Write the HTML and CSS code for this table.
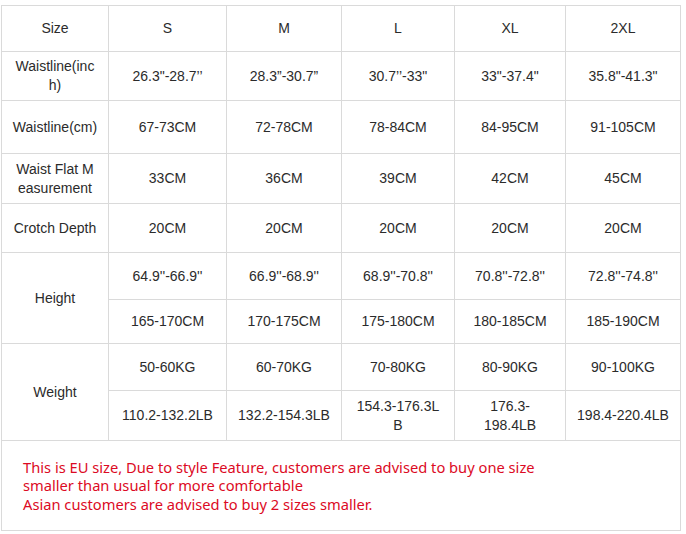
FILE: index.html
```html
<!DOCTYPE html>
<html lang="en">
<head>
<meta charset="utf-8">
<title>Size Chart</title>
<link rel="stylesheet" href="styles.css">
</head>
<body>
<div class="page">
<table class="chart">
  <colgroup>
    <col class="c-label">
    <col class="c-s">
    <col class="c-m">
    <col class="c-l">
    <col class="c-xl">
    <col class="c-2xl">
  </colgroup>
  <tbody>
    <tr class="r-head">
      <td>Size</td><td>S</td><td>M</td><td>L</td><td>XL</td><td>2XL</td>
    </tr>
    <tr class="r-waist-in">
      <td>Waistline(inc<br>h)</td><td>26.3"-28.7’’</td><td>28.3”-30.7”</td><td>30.7’’-33"</td><td>33"-37.4"</td><td>35.8"-41.3"</td>
    </tr>
    <tr class="r-waist-cm">
      <td>Waistline(cm)</td><td>67-73CM</td><td>72-78CM</td><td>78-84CM</td><td>84-95CM</td><td>91-105CM</td>
    </tr>
    <tr class="r-flat">
      <td>Waist Flat M<br>easurement</td><td>33CM</td><td>36CM</td><td>39CM</td><td>42CM</td><td>45CM</td>
    </tr>
    <tr class="r-crotch">
      <td>Crotch Depth</td><td>20CM</td><td>20CM</td><td>20CM</td><td>20CM</td><td>20CM</td>
    </tr>
    <tr class="r-height-in">
      <td rowspan="2">Height</td><td>64.9''-66.9''</td><td>66.9''-68.9''</td><td>68.9''-70.8''</td><td>70.8''-72.8''</td><td>72.8''-74.8''</td>
    </tr>
    <tr class="r-height-cm">
      <td>165-170CM</td><td>170-175CM</td><td>175-180CM</td><td>180-185CM</td><td>185-190CM</td>
    </tr>
    <tr class="r-weight-kg">
      <td rowspan="2">Weight</td><td>50-60KG</td><td>60-70KG</td><td>70-80KG</td><td>80-90KG</td><td>90-100KG</td>
    </tr>
    <tr class="r-weight-lb">
      <td>110.2-132.2LB</td><td>132.2-154.3LB</td><td>154.3-176.3L<br>B</td><td>176.3-<br>198.4LB</td><td>198.4-220.4LB</td>
    </tr>
    <tr class="r-note">
      <td colspan="6" class="note">This is EU size, Due to style Feature, customers are advised to buy one size<br>smaller than usual for more comfortable<br>Asian customers are advised to buy 2 sizes smaller.</td>
    </tr>
  </tbody>
</table>
</div>
</body>
</html>
```
FILE: styles.css
```css
html, body {
  margin: 0;
  padding: 0;
  background: #ffffff;
}

.page {
  padding: 5px 0 0 1px;
}

.chart {
  border-collapse: collapse;
  table-layout: fixed;
  width: 680px;
  font-family: "Liberation Sans", Arial, sans-serif;
  font-size: 14px;
  color: #2b2b2b;
}

.c-label { width: 107px; }
.c-s { width: 118px; }
.c-m { width: 115px; }
.c-l { width: 113px; }
.c-xl { width: 111px; }
.c-2xl { width: 115px; }

.chart td {
  border: 1px solid #dadada;
  text-align: center;
  vertical-align: middle;
  padding: 0 4px;
  line-height: 19px;
  white-space: nowrap;
}

.r-head { height: 46px; }
.r-waist-in { height: 49px; }
.r-waist-cm { height: 53px; }
.r-flat { height: 50px; }
.r-crotch { height: 49px; }
.r-height-in { height: 47px; }
.r-height-cm { height: 44px; }
.r-weight-kg { height: 47px; }
.r-weight-lb { height: 50px; }
.r-note { height: 90px; }

.chart td.note {
  text-align: left;
  padding: 0 0 0 21px;
  font-family: "Noto Sans", "Open Sans", sans-serif;
  font-size: 14.7px;
  line-height: 18.5px;
  color: #dc0a24;
}
```
